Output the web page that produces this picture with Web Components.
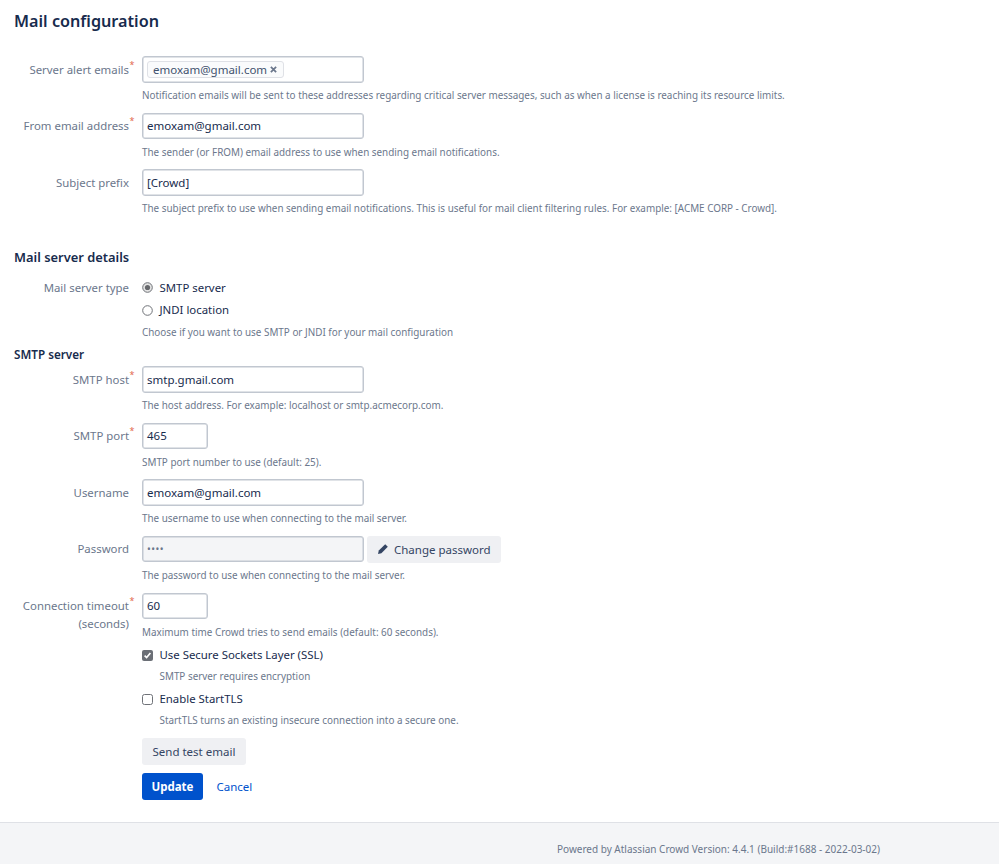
<!doctype html>
<html>
<head>
<meta charset="utf-8">
<title>Mail configuration</title>
<style>
  html, body { margin: 0; background: #fff; }
  body {
    font-family: "Noto Sans", "Liberation Sans", sans-serif;
    color: #172b4d;
    --label-color: #6b778c;
    --hint-color: #6b778c;
    --border-color: #c1c7d0;
  }
</style>
</head>
<body>
<mail-page>
  <page-heading level="1">Mail configuration</page-heading>

  <form-row label="Server alert emails" required hint="Notification emails will be sent to these addresses regarding critical server messages, such as when a license is reaching its resource limits.">
    <text-field><email-tag>emoxam@gmail.com</email-tag></text-field>
  </form-row>
  <form-row label="From email address" required hint="The sender (or FROM) email address to use when sending email notifications.">
    <text-field>emoxam@gmail.com</text-field>
  </form-row>
  <form-row label="Subject prefix" hint="The subject prefix to use when sending email notifications. This is useful for mail client filtering rules. For example: [ACME CORP - Crowd].">
    <text-field>[Crowd]</text-field>
  </form-row>

  <page-heading level="2">Mail server details</page-heading>
  <form-row label="Mail server type" compact hint="Choose if you want to use SMTP or JNDI for your mail configuration">
    <choice-item type="radio" checked>SMTP server</choice-item>
    <choice-item type="radio">JNDI location</choice-item>
  </form-row>

  <page-heading level="3">SMTP server</page-heading>
  <form-row label="SMTP host" required hint="The host address. For example: localhost or smtp.acmecorp.com.">
    <text-field>smtp.gmail.com</text-field>
  </form-row>
  <form-row label="SMTP port" required hint="SMTP port number to use (default: 25).">
    <text-field short>465</text-field>
  </form-row>
  <form-row label="Username" hint="The username to use when connecting to the mail server.">
    <text-field>emoxam@gmail.com</text-field>
  </form-row>
  <form-row label="Password" hint="The password to use when connecting to the mail server.">
    <div style="display:flex;gap:3px">
      <text-field disabled>••••</text-field>
      <action-button icon="pencil">Change password</action-button>
    </div>
  </form-row>
  <form-row label="Connection timeout (seconds)" required hint="Maximum time Crowd tries to send emails (default: 60 seconds).">
    <text-field short>60</text-field>
  </form-row>

  <form-row compact style="margin-top:-3px">
    <choice-item type="checkbox" checked hint="SMTP server requires encryption">Use Secure Sockets Layer (SSL)</choice-item>
    <choice-item type="checkbox" hint="StartTLS turns an existing insecure connection into a secure one.">Enable StartTLS</choice-item>
    <div style="display:flex;flex-direction:column;align-items:flex-start;gap:7.5px;margin-top:4px">
      <action-button>Send test email</action-button>
      <div style="display:flex;align-items:center;gap:13.5px">
        <action-button primary>Update</action-button>
        <action-button link>Cancel</action-button>
      </div>
    </div>
  </form-row>

  <page-footer>Powered by Atlassian Crowd Version: 4.4.1 (Build:#1688 - 2022-03-02)</page-footer>
</mail-page>

<script>
class MailPage extends HTMLElement {
	constructor() {
		super();
		this.attachShadow({ mode: 'open' });
		this.shadowRoot.innerHTML = `
      <style>
        :host { display: block; min-height: 864px; }
        main { padding: 0 14px; height: 822px; box-sizing: border-box; }
      </style>
      <main><slot></slot></main>
      <slot name="footer"></slot>
    `;
	}

	connectedCallback() {
		const footer = this.querySelector('page-footer');
		if (footer) footer.slot = 'footer';
	}
}

class PageHeading extends HTMLElement {
	constructor() {
		super();
		this.attachShadow({ mode: 'open' });
		this.shadowRoot.innerHTML = `
      <style>
        :host { display: block; font-weight: 600; color: #172b4d; }
        :host([level="1"]) { font-size: 16.2px; line-height: 22px; padding: 10px 0 24px; }
        :host([level="2"]) { font-size: 12.9px; line-height: 18px; padding: 22px 0 13px; }
        :host([level="3"]) { font-size: 11.7px; line-height: 16px; padding: 0 0 4px; margin-top: -1px; }
      </style>
      <slot></slot>
    `;
	}
}

class FormRow extends HTMLElement {
	constructor() {
		super();
		this.attachShadow({ mode: 'open' });
		this.shadowRoot.innerHTML = `
      <style>
        :host { display: grid; grid-template-columns: 115px 1fr; column-gap: 13px; padding-bottom: 9.5px; }
        :host([compact]) { padding-bottom: 7.5px; }
        .label { text-align: right; font-size: 11.4px; line-height: 18px; padding-top: 4.5px; color: var(--label-color); }
        :host([compact]) .label { padding-top: 0; }
        .star { color: #e2694c; font-size: 9px; line-height: 10px; position: absolute; margin-top: -1px; margin-left: .5px; }
        .hint { font-size: 9.9px; line-height: 15px; margin-top: 5.5px; color: var(--hint-color); white-space: nowrap; }
        :host([compact]) .hint { margin-top: 1px; }
        .hint:empty { display: none; }
      </style>
      <div class="label"></div>
      <div class="body">
        <slot></slot>
        <div class="hint"></div>
      </div>
    `;
	}

	connectedCallback() {
		const label = this.shadowRoot.querySelector('.label');
		label.textContent = this.getAttribute('label') || '';
		if (this.hasAttribute('required')) {
			const star = document.createElement('span');
			star.className = 'star';
			star.textContent = '*';
			const text = label.firstChild;
			const words = text.textContent.match(/^(.*?)( \(.*\))?$/);
			text.textContent = words[1];
			label.append(star);
			if (words[2]) label.append(document.createElement('br'), words[2].trim());
		}
		this.shadowRoot.querySelector('.hint').textContent = this.getAttribute('hint') || '';
	}
}

class TextField extends HTMLElement {
	constructor() {
		super();
		this.attachShadow({ mode: 'open' });
		this.shadowRoot.innerHTML = `
      <style>
        :host {
          display: flex; align-items: center; box-sizing: border-box;
          width: 221.5px; height: 26.5px; padding: 0 4px;
          background: #fff; border: 1px solid var(--border-color); border-radius: 3px;
          box-shadow: inset 0 0 0 .5px var(--border-color);
          font-size: 11.5px; color: #172b4d; white-space: nowrap;
        }
        :host([short]) { width: 66px; }
        :host([disabled]) { background: #f4f5f7; color: #6b778c; font-size: 10px; letter-spacing: .5px; }
      </style>
      <slot></slot>
    `;
	}
}

class EmailTag extends HTMLElement {
	constructor() {
		super();
		this.attachShadow({ mode: 'open' });
		this.shadowRoot.innerHTML = `
      <style>
        :host {
          display: inline-flex; align-items: center; gap: 3px; height: 15px; padding: 0 6px 0 5px;
          background: #fafbfc; border: 1px solid #dfe1e6; border-radius: 3px;
          color: #42526e; font-size: 11.5px;
        }
        svg { width: 7px; height: 7px; margin-top: 1px; }
      </style>
      <slot></slot>
      <svg viewBox="0 0 8 8"><path d="M1 1l6 6M7 1L1 7" stroke="#6b778c" stroke-width="2" fill="none"/></svg>
    `;
	}
}

class ChoiceItem extends HTMLElement {
	constructor() {
		super();
		this.attachShadow({ mode: 'open' });
		this.shadowRoot.innerHTML = `
      <style>
        :host { display: grid; grid-template-columns: 11px 1fr; column-gap: 6.5px; align-items: center; font-size: 11.4px; line-height: 18px; color: #172b4d; padding-bottom: 4.5px; }
        svg { width: 11px; height: 11px; display: block; }
        .hint { grid-column: 2; font-size: 9.9px; line-height: 15px; color: var(--hint-color); margin-top: 4.5px; margin-bottom: 2px; }
        .hint:empty { display: none; }
      </style>
      <span class="mark"></span>
      <span><slot></slot></span>
      <div class="hint"></div>
    `;
	}

	connectedCallback() {
		const checked = this.hasAttribute('checked');
		const mark = this.shadowRoot.querySelector('.mark');
		if (this.getAttribute('type') === 'radio') {
			mark.innerHTML = `<svg viewBox="0 0 11 11"><circle cx="5.5" cy="5.5" r="4.8" fill="${checked ? '#e4e4e4' : '#fff'}" stroke="#6f7278"/>${checked ? '<circle cx="5.5" cy="5.5" r="2.6" fill="#66686c"/>' : ''}</svg>`;
		} else {
			mark.innerHTML = checked
				? '<svg viewBox="0 0 11 11"><rect width="11" height="11" rx="2" fill="#6b6f76"/><path d="M2.6 5.6l2 2 3.8-4.6" stroke="#fff" stroke-width="1.6" fill="none"/></svg>'
				: '<svg viewBox="0 0 11 11"><rect x=".5" y=".5" width="10" height="10" rx="2" fill="#fff" stroke="#6f7278"/></svg>';
		}
		this.shadowRoot.querySelector('.hint').textContent = this.getAttribute('hint') || '';
	}
}

class ActionButton extends HTMLElement {
	constructor() {
		super();
		this.attachShadow({ mode: 'open' });
		this.shadowRoot.innerHTML = `
      <style>
        :host {
          display: inline-flex; align-items: center; gap: 5px; box-sizing: border-box;
          height: 27px; padding: 0 10.5px; border-radius: 3px;
          background: #eff0f3; color: #344563; font-size: 11.5px; white-space: nowrap;
        }
        :host([primary]) { background: #0052cc; color: #fff; font-weight: 700; padding: 0 9.5px; }
        :host([link]) { background: none; color: #0052cc; padding: 0; }
        svg { width: 12px; height: 12px; }
      </style>
      <span class="icon"></span>
      <slot></slot>
    `;
	}

	connectedCallback() {
		const icon = this.shadowRoot.querySelector('.icon');
		if (this.getAttribute('icon') === 'pencil') {
			icon.style.display = 'inline-flex';
			icon.innerHTML = '<svg viewBox="0 0 12 12"><path d="M8.2 1.2l2.6 2.6-6.4 6.4L1 11l.8-3.4z" fill="#344563"/></svg>';
		} else {
			icon.remove();
		}
	}
}

class PageFooter extends HTMLElement {
	constructor() {
		super();
		this.attachShadow({ mode: 'open' });
		this.shadowRoot.innerHTML = `
      <style>
        :host {
          display: flex; align-items: center; box-sizing: border-box; height: 42px; padding: 10px 0 0 557px;
          background: #f4f5f7; border-top: 1px solid #dfe1e6;
          font-size: 10px; color: #6b778c; white-space: nowrap;
        }
      </style>
      <slot></slot>
    `;
	}
}

customElements.define('mail-page', MailPage);
customElements.define('page-heading', PageHeading);
customElements.define('form-row', FormRow);
customElements.define('text-field', TextField);
customElements.define('email-tag', EmailTag);
customElements.define('choice-item', ChoiceItem);
customElements.define('action-button', ActionButton);
customElements.define('page-footer', PageFooter);
</script>
</body>
</html>
